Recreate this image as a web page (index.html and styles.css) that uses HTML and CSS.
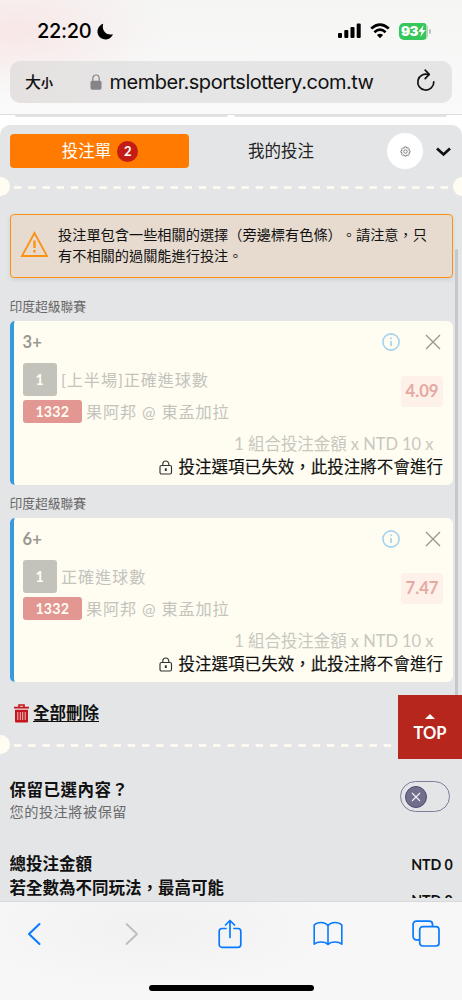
FILE: index.html
```html
<!DOCTYPE html>
<html lang="zh-Hant">
<head>
<meta charset="utf-8">
<title>投注單</title>
<link rel="stylesheet" href="styles.css">
</head>
<body>
<div class="phone">
  <header class="chrome-top">
    <div class="status">
      <span class="clock">22:20</span>
      <svg class="moon" width="17" height="17" viewBox="0 0 17 17"><path d="M6.200.8A8 8 0 1 0 16 11.200C9.500 13.200 4.300 7.500 6.200.8Z"/></svg>
      <svg class="signal" width="25" height="16" viewBox="0 0 25 16"><rect x="1" y="10" width="4" height="5" rx="1"/><rect x="7.300" y="7" width="4" height="8" rx="1"/><rect x="13.500" y="4" width="4" height="11" rx="1"/><rect x="19.700" y="0.500" width="4" height="14.500" rx="1"/></svg>
      <svg class="wifi" width="20" height="16" viewBox="0 0 20 16" fill="none" stroke="#000" stroke-width="2.700"><path d="M1.200 5.600Q10-2.400 18.800 5.600"/><path d="M4.400 9.200Q10 4.200 15.600 9.200"/><path d="M10 15.200L6.900 12Q10 9.600 13.100 12Z" fill="#000" stroke="none"/></svg>
      <span class="battery"><b>93</b><svg width="8" height="12" viewBox="0 0 8 12"><path d="M5.600 0L.4 6.800H3.500L2.300 12L7.600 4.900H4.500Z" fill="#fff"/></svg></span><i class="battery-tip"></i>
    </div>
    <div class="address">
      <span class="aa">大<small>小</small></span>
      <svg class="padlock" width="12" height="16" viewBox="0 0 12 16"><path d="M2.800 8V4.500a3.200 3.500 0 0 1 6.400 0V8" fill="none" stroke="#858588" stroke-width="1.200"/><rect x=".5" y="6.700" width="11" height="9" rx="1.600" fill="#858588"/></svg>
      <span class="url">member.sportslottery.com.tw</span>
      <svg class="reload" width="20" height="23" viewBox="0 0 20 23" fill="none" stroke="#111" stroke-width="1.700" stroke-linecap="round" stroke-linejoin="round"><path d="M12.700 5.600A8 8 0 1 0 17.800 12.800"/><path d="M9.200 1.200L13.200 5.400L9.200 9.600"/></svg>
    </div>
  </header>

  <div class="peek"><i></i><i></i></div>

  <main class="slip">
    <nav class="tabs">
      <div class="tab active">投注單<span class="count">2</span></div>
      <div class="tab">我的投注</div>
      <div class="gear"><svg width="11" height="11" viewBox="0 0 24 24" fill="none" stroke="#555" stroke-width="1.500"><path d="M10 2h4l1 3 3-1.300 2.500 2.800L19 9.500l3 1.500v3l-3 1.300 1.300 3-2.600 2.500L15 19.300 14 22h-4l-1.200-2.700-3 1.400-2.500-2.600L4.800 15 2 14v-3.500l2.800-1.200L3.500 6.300 6 3.700 9 5Z"/><circle cx="12" cy="12" r="3.800"/></svg></div>
      <svg class="chevron" width="15" height="10" viewBox="0 0 15 10" fill="none" stroke="#111" stroke-width="2.700"><path d="M1 1.500L7.500 7.500L14 1.500"/></svg>
    </nav>

    <div class="tear"><i></i><svg width="434" height="3"><path d="M0 1.500H434" stroke="#fffdf2" stroke-width="2.400" stroke-dasharray="7.400 6.820"/></svg><i></i></div>

    <div class="alert">
      <svg width="29" height="28" viewBox="0 0 29 28" fill="none" stroke="#fb9214"><path d="M14.500 3L27 26H2Z" stroke-width="1.800"/><path d="M14.500 10.500V18M14.500 20V22.500" stroke-width="2.400"/></svg>
      <p>投注單包含一些相關的選擇（旁邊標有色條）。請注意，只<br>有不相關的過關能進行投注。</p>
    </div>

    <h3 class="league">印度超級聯賽</h3>
    <article class="card">
      <div class="card-head"><span class="pick">3+</span>
        <svg class="info" width="18" height="18" viewBox="0 0 18 18" fill="none" stroke="#a5d2ed"><circle cx="9" cy="9" r="8.100" stroke-width="1.600"/><path d="M9 7.900V13M9 4.600V6.200" stroke-width="1.700"/></svg>
        <svg class="close" width="16" height="16" viewBox="0 0 16 16" stroke="#96968f" stroke-width="1.250"><path d="M1 1L15 15M15 1L1 15"/></svg></div>
      <div class="card-main">
        <div class="legs">
          <div class="leg"><b class="tag grey">1</b><span>[上半場]正確進球數</span></div>
          <div class="leg"><b class="tag red">1332</b><span>果阿邦 @ 東孟加拉</span></div>
        </div>
        <b class="odds">4.09</b>
      </div>
      <div class="stake">1 組合投注金額 x NTD 10 x</div>
      <div class="invalid"><svg width="14" height="15" viewBox="0 0 14 15" fill="none" stroke="#333" stroke-width="1.150"><rect x="1" y="5.500" width="11.500" height="8.500" rx="1.500"/><path d="M3.800 5.500V4a3 3 0 0 1 6 0V5.500"/><path d="M6.800 8.300V11" stroke-width="2"/></svg>投注選項已失效，此投注將不會進行</div>
    </article>

    <h3 class="league second">印度超級聯賽</h3>
    <article class="card">
      <div class="card-head"><span class="pick">6+</span>
        <svg class="info" width="18" height="18" viewBox="0 0 18 18" fill="none" stroke="#a5d2ed"><circle cx="9" cy="9" r="8.100" stroke-width="1.600"/><path d="M9 7.900V13M9 4.600V6.200" stroke-width="1.700"/></svg>
        <svg class="close" width="16" height="16" viewBox="0 0 16 16" stroke="#96968f" stroke-width="1.250"><path d="M1 1L15 15M15 1L1 15"/></svg></div>
      <div class="card-main">
        <div class="legs">
          <div class="leg"><b class="tag grey">1</b><span>正確進球數</span></div>
          <div class="leg"><b class="tag red">1332</b><span>果阿邦 @ 東孟加拉</span></div>
        </div>
        <b class="odds">7.47</b>
      </div>
      <div class="stake">1 組合投注金額 x NTD 10 x</div>
      <div class="invalid"><svg width="14" height="15" viewBox="0 0 14 15" fill="none" stroke="#333" stroke-width="1.150"><rect x="1" y="5.500" width="11.500" height="8.500" rx="1.500"/><path d="M3.800 5.500V4a3 3 0 0 1 6 0V5.500"/><path d="M6.800 8.300V11" stroke-width="2"/></svg>投注選項已失效，此投注將不會進行</div>
    </article>

    <div class="clear">
      <svg width="15" height="19" viewBox="0 0 15 19"><path d="M0 3.600H15M5 3.500V1H10V3.500" fill="none" stroke="#c4161c" stroke-width="1.600"/><path d="M1 5.800H14V17.500a1 1 0 0 1-1 1H2a1 1 0 0 1-1-1Z" fill="#c4161c"/><path d="M3.800 8V16M6.300 8V16M8.700 8V16M11.200 8V16" stroke="#ecd5d6" stroke-width=".9"/></svg>
      <a>全部刪除</a>
    </div>

    <div class="tear lower"><i></i><svg width="434" height="3"><path d="M0 1.500H434" stroke="#fffdf2" stroke-width="2.400" stroke-dasharray="7.400 6.820"/></svg><i></i></div>

    <section class="keep">
      <div><h4>保留已選內容？</h4><p>您的投注將被保留</p></div>
      <div class="switch"><span><svg width="10" height="10" viewBox="0 0 10 10" stroke="#f2f2f6" stroke-width="1.100"><path d="M1 1L9 9M9 1L1 9"/></svg></span></div>
    </section>

    <section class="totals">
      <div class="row"><b>總投注金額</b><strong>NTD 0</strong></div>
      <div class="row"><b>若全數為不同玩法，最高可能</b><strong class="low">NTD 0</strong></div>
    </section>

    <div class="scrollbar"></div>
    <div class="to-top"><i></i>TOP</div>
  </main>

  <footer class="chrome-bottom">
    <div class="tools">
      <svg width="30" height="24" viewBox="0 0 14 24" fill="none" stroke="#087aff" stroke-width="2" stroke-linecap="round" stroke-linejoin="round"><path d="M12.500 2L2 12L12.500 22"/></svg>
      <svg width="30" height="24" viewBox="0 0 14 24" fill="none" stroke="#bdbdbf" stroke-width="1.800" stroke-linecap="round" stroke-linejoin="round"><path d="M1.500 2L12 12L1.500 22"/></svg>
      <svg width="30" height="30" viewBox="0 0 24 30" fill="none" stroke="#087aff" stroke-width="1.700" stroke-linecap="round" stroke-linejoin="round"><path d="M8 9.500H4A2.800 2.800 0 0 0 1.200 12.300V25.500A2.800 2.800 0 0 0 4 28.300H20A2.800 2.800 0 0 0 22.800 25.500V12.300A2.800 2.800 0 0 0 20 9.500H16"/><path d="M12 18.500V1.800M7.500 6L12 1.500L16.500 6"/></svg>
      <svg width="30" height="25" viewBox="0 0 30 25" fill="none" stroke="#087aff" stroke-width="1.600" stroke-linejoin="round" stroke-linecap="round"><path d="M15 4.500C12 .5 4.500.5 1.200 4V23.200C4.500 20.200 12 20.200 15 23.500C18 20.200 25.500 20.200 28.800 23.200V4C25.500.5 18 .5 15 4.500V23"/></svg>
      <svg width="30" height="27" viewBox="0 0 28 27" fill="none" stroke="#087aff" stroke-width="1.700"><rect x="7.700" y="6.700" width="19.300" height="19.300" rx="3"/><path d="M7 19.800H4.300A3.200 3.200 0 0 1 1.100 16.600V4.300A3.200 3.200 0 0 1 4.300 1.100H17.300A3.200 3.200 0 0 1 20.500 4.300V6"/></svg>
    </div>
    <div class="home"></div>
  </footer>
</div>
</body>
</html>
```

FILE: styles.css
```css
* { box-sizing: border-box; }
body, h3, h4, p { margin: 0; }
body {
  background: #fff;
  color: #1b1b1b;
  font-family: Lato, "Noto Sans CJK TC", sans-serif;
  text-spacing-trim: space-all;
}
svg { display: block; flex: none; }
.phone { width: 462px; height: 1000px; overflow: hidden; display: flex; flex-direction: column; }

/* Browser chrome */
.chrome-top {
  height: 115px;
  flex: none;
  border-bottom: 1px solid #dedede;
  background: radial-gradient(ellipse 150px 65px at 15px 30px, #f8e7e7, rgba(248,231,231,0)), linear-gradient(#f5f5f4, #fafafa);
}
.status { display: flex; align-items: center; height: 60.500px; padding: 2px 31px 0 37px; }
.clock { width: 55px; font: 500 20px/24px Inter, sans-serif; letter-spacing: -.35px; color: #000; }
.moon { margin-left: 5px; }
.signal { margin-left: auto; }
.wifi { margin-left: 8px; }
.battery {
  display: flex; align-items: center; justify-content: center; gap: 0;
  width: 29px; height: 17px; margin-left: 9px;
  border-radius: 5px; background: linear-gradient(90deg, #35c759 93%, #a9dab5 93%);
  font: 700 13.500px/17px Inter, sans-serif; letter-spacing: -.5px; color: #fff;
}
.battery-tip { width: 2px; height: 5px; margin-left: 1px; border-radius: 0 2px 2px 0; background: #bbb; }
.address {
  display: flex; align-items: center;
  height: 42.500px; margin: 0 10px; padding: 0 16px 0 15px;
  border-radius: 10px; background: linear-gradient(90deg, #e6e1e1, #e5e5e5 30%);
  color: #111;
}
.aa { width: 57px; font: 500 16px/20px "Noto Sans CJK TC", sans-serif; }
.aa small { font-size: 12px; font-weight: 700; }
.padlock { margin: 0 7.500px 0 8px; }
.url { font: 400 20px/24px Inter, sans-serif; white-space: nowrap; letter-spacing: -.48px; }
.reload { margin-left: auto; margin-top: -3px; }
.peek { display: flex; gap: 6px; height: 10px; flex: none; padding: 0 15px; }
.peek i { flex: 1; height: 2px; border-radius: 0 0 6px 6px; background: #e3e3e4; }

/* Bet slip */
.slip {
  position: relative;
  height: 776px; flex: none; overflow: hidden;
  border-radius: 10px 10px 0 0;
  background: #e4e5e7;
}
.tabs { display: flex; align-items: center; height: 52px; padding: 0 11px 0 9.500px; }
.tab { width: 184px; height: 33.500px; text-align: center; font-size: 16.500px; line-height: 34px; color: #222; }
.tab.active {
  display: flex; align-items: center; justify-content: center; gap: 6px;
  width: 179.500px; padding-left: 1.500px; border-radius: 4px; background: #ff7a00; color: #fff;
}
.count { width: 21px; height: 21px; border-radius: 50%; background: #c41c14; font-size: 13px; font-weight: 700; line-height: 21px; }
.gear { display: grid; place-items: center; width: 36px; height: 36px; margin-left: 14px; border-radius: 50%; background: #fff; }
.chevron { margin-left: auto; margin-top: 2px; }
.tear { display: flex; align-items: center; justify-content: space-between; height: 19px; margin: 0 -9.500px; }
.tear i { width: 19px; height: 19px; border-radius: 50%; background: #fffdf2; }
.tear svg { margin-top: 2px; }
.alert {
  display: flex; align-items: flex-start;
  height: 64px; margin: 18px 9.500px 0; padding: 9px 9px;
  border: 1px solid #fb9214; border-radius: 4px;
  background: #e7dbcf; box-shadow: 0 2px 4px rgba(0,0,0,.09);
  color: #111;
}
.alert svg { margin-top: 6px; }
.alert p { margin-left: 9.500px; font-size: 14.200px; line-height: 21.300px; white-space: nowrap; }
.league { height: 42.500px; padding: 18px 9.500px 0; font-size: 12.750px; font-weight: 400; line-height: 20px; color: #666; }
.league.second { height: 32.500px; padding-top: 8px; }
.card {
  height: 164.500px; margin: 0 9.500px; padding: 9px 9.500px 0 9px;
  border-left: 4px solid #359bdc; border-radius: 5px 6px 6px 5px;
  background: #fffdf2;
}
.card-head { display: flex; align-items: center; height: 25px; }
.pick { font-size: 16.500px; font-weight: 700; letter-spacing: .1px; color: #999993; }
.info { margin-left: auto; }
.close { margin: 0 2px 0 25px; }
.card-main { display: flex; justify-content: space-between; padding-top: 8.500px; height: 72px; }
.legs { display: flex; flex-direction: column; gap: 4px; }
.leg { display: flex; align-items: center; gap: 4px; font-size: 16.200px; letter-spacing: .85px; color: #c4c3bc; white-space: nowrap; }
.leg span { line-height: 23px; }
.tag { display: grid; place-items: center; border-radius: 3px; color: #fffdf2; font-size: 14.200px; letter-spacing: .2px; }
.tag.grey { width: 34.500px; height: 32.500px; background: #c3c2bb; }
.tag.red { width: 59.500px; height: 23.500px; background: #e29792; }
.odds {
  width: 42px; height: 31px; margin-top: 13px; border-radius: 4px;
  background: #fdf1e9; color: #e5a9a1; text-align: center; font-size: 16.700px; line-height: 31px;
}
.stake { height: 24px; padding-right: 9.500px; margin-top: 5.500px; text-align: right; font-size: 16.500px; letter-spacing: -.05px; line-height: 24px; color: #c8c7c0; white-space: nowrap; }
.invalid { display: flex; align-items: center; justify-content: flex-end; gap: 6px; height: 23px; font-size: 16.550px; font-weight: 400; -webkit-text-stroke: .15px #111; line-height: 23px; color: #111; white-space: nowrap; }
.clear { display: flex; align-items: center; gap: 4px; height: 53px; padding: 9px 14px 0; font-size: 16.500px; font-weight: 700; line-height: 24px; color: #111; }
.clear a { text-decoration: underline; text-decoration-thickness: 1px; text-underline-offset: 2px; }
.keep { display: flex; justify-content: space-between; margin: 24px 12px 0 9.500px; color: #111; }
.keep h4 { font-size: 16.500px; line-height: 24px; letter-spacing: .5px; }
.keep p { font-size: 14.200px; line-height: 20px; letter-spacing: .5px; color: #6a6a6c; }
.switch { width: 50px; height: 31px; margin-top: 3px; padding: 4px; border: 1px solid #7f7c9b; border-radius: 16px; }
.switch span { display: grid; place-items: center; width: 22px; height: 22px; border: 1.500px solid #4c4b70; border-radius: 50%; background: #716f8c; }
.totals { height: 45px; margin: 31px 9.500px 0; overflow: hidden; color: #111; }
.row { display: flex; justify-content: space-between; height: 24px; font-size: 16.500px; line-height: 23px; }
.row strong { font-size: 14.200px; letter-spacing: -.15px; }
.row .low { margin-top: 12px; }
.scrollbar { position: absolute; top: 124px; right: 4px; width: 3px; height: 460px; border-radius: 2px; background: #c6c7ca; }
.to-top {
  position: absolute; top: 570px; right: 0;
  display: flex; flex-direction: column; align-items: center;
  width: 64px; height: 64px; padding-top: 19px;
  background: #b7261c; color: #fff; font-size: 16.500px; font-weight: 700; line-height: 28px;
}
.to-top i { border: 5px solid transparent; border-top: 0; border-bottom-color: #fff; }

/* Toolbar */
.chrome-bottom { height: 99px; flex: none; border-top: 1px solid #d9d9da; background: radial-gradient(ellipse 190px 65px at 150px 25px, #f1f1f1, #f7f7f7); }
.tools { display: flex; align-items: center; justify-content: space-between; height: 63px; padding: 0 21px 0 19px; }
.home { width: 165px; height: 6px; margin: 20px 0 0 149px; border-radius: 3px; background: #000; }
```
